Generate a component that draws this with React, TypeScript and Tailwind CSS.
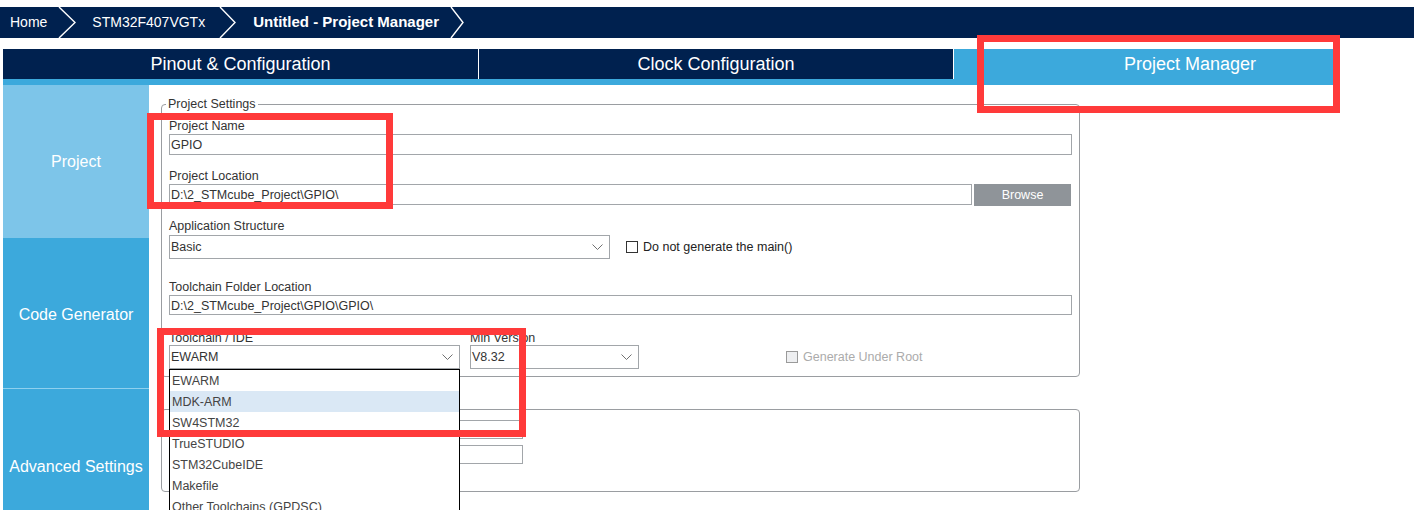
import React from "react";

const toolchains = ["EWARM", "MDK-ARM", "SW4STM32", "TrueSTUDIO", "STM32CubeIDE", "Makefile", "Other Toolchains (GPDSC)"];

function Chevron({ w }: { w: number }) {
  return (
    <svg width={w} height={31} viewBox={`0 0 ${w} 31`} className="shrink-0">
      <polyline points={`1,0 ${w - 1},15.5 1,31`} fill="none" stroke="white" strokeWidth="1.4" />
    </svg>
  );
}

function DownArrow() {
  return (
    <svg width="11" height="6" viewBox="0 0 11 6" className="shrink-0">
      <polyline points="0.5,0.5 5.5,5.5 10.5,0.5" fill="none" stroke="#707070" strokeWidth="1" />
    </svg>
  );
}

function Label({ children }: { children: React.ReactNode }) {
  return <div className="h-[15px] pt-[1px] leading-[15px] text-[12.5px] text-[#333]">{children}</div>;
}

function Input({ value, className = "" }: { value: string; className?: string }) {
  return (
    <div className={`flex items-center border border-[#a2a6aa] bg-white pl-[1px] pt-[2px] text-[12.5px] text-[#333] ${className}`}>
      {value}
    </div>
  );
}

function Select({ value, className = "" }: { value: string; className?: string }) {
  return (
    <div className={`flex h-[24px] items-center justify-between border border-[#a2a6aa] bg-white pl-[1px] pr-[6px] text-[12.5px] text-[#333] ${className}`}>
      <span className="pt-[1px]">{value}</span>
      <DownArrow />
    </div>
  );
}

function RedBox({ className }: { className: string }) {
  return <div className={`pointer-events-none absolute border-[7px] border-[#ff3a3a] ${className}`} />;
}

export default function App() {
  return (
    <div className="relative h-[510px] w-[1414px] overflow-hidden bg-white font-['Liberation_Sans',Arial,sans-serif]">
      {/* breadcrumbs */}
      <div className="mt-[7px] flex h-[31px] items-center bg-[#00214f] pl-[10px] text-[14px] text-white">
        <span>Home</span>
        <span className="ml-[11px]"><Chevron w={18} /></span>
        <span className="ml-[16px]">STM32F407VGTx</span>
        <span className="ml-[14px]"><Chevron w={17} /></span>
        <span className="ml-[17px] text-[15px] font-bold">Untitled - Project Manager</span>
        <span className="ml-[11px]"><Chevron w={14} /></span>
      </div>

      {/* tabs */}
      <div className="ml-[3px] mt-[11px] flex h-[30px] w-[1333px] overflow-hidden text-[18px] text-white">
        <div className="flex w-[475px] shrink-0 items-center justify-center bg-[#00214f] pt-[1px]">Pinout &amp; Configuration</div>
        <div className="w-[1px] shrink-0 bg-white" />
        <div className="flex w-[474px] shrink-0 items-center justify-center bg-[#00214f] pt-[1px]">Clock Configuration</div>
        <div className="w-[1px] shrink-0 bg-white" />
        <div className="flex w-[472px] shrink-0 items-center justify-center bg-[#3ca9dc] pt-[1px]">Project Manager</div>
      </div>
      <div className="ml-[3px] h-[6px] w-[1333px] bg-[#3ca9dc]" />

      <div className="flex">
        {/* sidebar */}
        <div className="ml-[3px] flex w-[146px] shrink-0 flex-col text-[16px] text-white">
          <div className="flex h-[153px] items-center justify-center bg-[#7dc5e9] pt-[1px]">Project</div>
          <div className="flex h-[150px] items-center justify-center bg-[#3ca9dc] pt-[3px]">Code Generator</div>
          <div className="h-[1px] bg-[#8fd0ee]" />
          <div className="flex h-[156px] items-center justify-center bg-[#3ca9dc]">Advanced Settings</div>
        </div>

        {/* content */}
        <div className="pl-[12px] pt-[19px]">
          <div className="relative w-[919px] rounded-[4px] border border-[#9a9da1] px-[7px] pb-[7px] pt-[13px]">
            <div className="absolute -top-[8px] left-[4px] bg-white px-[2px] text-[12.5px] leading-[15px] text-[#333]">Project Settings</div>

            <Label>Project Name</Label>
            <Input value="GPIO" className="mt-[1px] h-[21px]" />

            <div className="mt-[13px]"><Label>Project Location</Label></div>
            <div className="mt-[1px] flex h-[22px] items-start">
              <Input value="D:\2_STMcube_Project\GPIO\" className="h-[21px] w-[803px]" />
              <div className="ml-[2px] flex h-[22px] w-[97px] items-center justify-center bg-[#8f9499] pt-[1px] text-[12.5px] text-white">Browse</div>
            </div>

            <div className="mt-[12px]"><Label>Application Structure</Label></div>
            <div className="mt-[2px] flex items-center">
              <Select value="Basic" className="w-[441px]" />
              <div className="ml-[16px] h-[12px] w-[12px] border border-[#333] bg-white" />
              <span className="ml-[5px] text-[12.5px] text-[#222]">Do not generate the main()</span>
            </div>

            <div className="mt-[20px]"><Label>Toolchain Folder Location</Label></div>
            <Input value="D:\2_STMcube_Project\GPIO\GPIO\" className="mt-[1px] h-[20px]" />

            <div className="mt-[15px] flex">
              <div className="w-[301px]"><Label>Toolchain / IDE</Label></div>
              <Label>Min Version</Label>
            </div>
            <div className="flex items-center">
              <Select value="EWARM" className="w-[291px]" />
              <Select value="V8.32" className="ml-[10px] w-[169px]" />
              <div className="ml-[147px] h-[12px] w-[12px] border border-[#9a9a9a] bg-[#eeeff1]" />
              <span className="ml-[5px] text-[12.5px] text-[#ababab]">Generate Under Root</span>
            </div>
          </div>

          {/* linker settings: mostly hidden under the open list */}
          <div className="mt-[32px] flex h-[83px] w-[919px] flex-col gap-[6px] rounded-[4px] border border-[#9a9da1] pl-[158px] pt-[10px]">
            <div className="h-[19px] w-[203px] border border-[#a2a6aa] bg-white" />
            <div className="h-[19px] w-[203px] border border-[#a2a6aa] bg-white" />
          </div>
        </div>
      </div>

      {/* open toolchain list */}
      <div className="absolute left-[169px] top-[369px] w-[291px] border border-black bg-white">
        {toolchains.map((t) => (
          <div key={t} className={`flex h-[21px] items-center pl-[2px] pt-[2px] text-[12.5px] text-[#444] ${t === "MDK-ARM" ? "bg-[#dae8f5]" : ""}`}>
            {t}
          </div>
        ))}
      </div>

      {/* annotations */}
      <RedBox className="left-[147px] top-[113px] h-[96px] w-[246px]" />
      <RedBox className="left-[977px] top-[35px] h-[78px] w-[363px]" />
      <RedBox className="left-[157px] top-[328px] h-[109px] w-[369px]" />
    </div>
  );
}
